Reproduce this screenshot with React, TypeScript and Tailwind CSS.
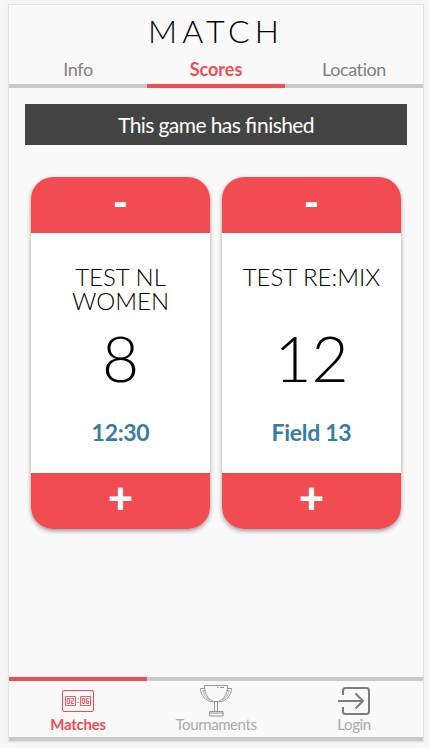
import React from "react";

function Tab({ label, active = false }: { label: string; active?: boolean }) {
  return (
    <button
      className={`flex h-[38px] flex-1 items-start justify-center border-b-4 pt-[7px] text-[18px] leading-[24px] ${
        active
          ? "border-[#f14c52] font-bold text-[#f14c52]"
          : "border-[#cdc9ca] tracking-[-0.4px] text-[#808080]"
      }`}
    >
      {label}
    </button>
  );
}

function Card({ team, score, detail }: { team: string; score: number; detail: string }) {
  return (
    <section className="flex h-[352px] w-[179px] flex-col overflow-hidden rounded-[22px] bg-white text-center shadow-[0_2px_4px_rgba(0,0,0,0.38)]">
      <button className="flex h-14 items-start justify-center bg-[#f14c52] text-[41px] leading-[50px] font-black text-white">
        -
      </button>
      <div className="flex h-[240px] flex-col items-center">
        <h2 className="mt-8 h-12 w-[150px] text-[24px] leading-[24px] font-light text-black">{team}</h2>
        <div className="mt-[13px] h-16 text-[64px] leading-[64px] font-light text-black">{score}</div>
        <div className="mt-[30px] text-[23px] leading-6 font-bold tracking-[-0.3px] text-[#377ba8]">{detail}</div>
      </div>
      <button className="flex h-14 items-start justify-center bg-[#f14c52] text-[44px] leading-[48px] font-black text-white">
        +
      </button>
    </section>
  );
}

function ScoreboardIcon() {
  return (
    <svg width="32" height="22" viewBox="0 0 32 22" fill="none" stroke="#f14c52">
      <rect x="0.5" y="0.5" width="31" height="21" rx="1.5" />
      <path strokeWidth="0.9" d="M3.500 6.500h10v9h-10zM18.500 6.500h10v9h-10z" />
      <path
        strokeWidth="0.9"
        d="M5.300 8.500h2.200v5H5.300zM9 8.500h2.600V11H9.400v2.500H12M20.300 8.500h2.200v5h-2.200zM27 8.500h-2.600v5h2.200V11h-2.200M15.200 9h1.600M15.200 12.500h1.600"
      />
    </svg>
  );
}

function TrophyIcon() {
  return (
    <svg width="34" height="33" viewBox="0 0 34 33" fill="none" stroke="#8b8b8b" strokeWidth="0.9">
      <path d="M5.500 3.500V1.500h23v2M18 3.500h1.500M21 3.500h4M5.500 3.500C6 11 10 17.500 17 17.500S28 11 28.500 3.500" />
      <path d="M5.500 4.500H1.500C1.500 11 6.500 17.500 14 18M28.500 4.500h4C32.500 11 27.500 17.500 20 18" />
      <path strokeWidth="0.7" d="M6 6.500H3.800C5 11.500 7.500 14.500 11 16M28 6.500h2.200C29 11.500 26.500 14.500 23 16" />
      <path d="M15.500 18v9M18.500 18v9M10.500 27.500h13.500v4.500H10.500zM10.500 29h13.500" />
    </svg>
  );
}

function LoginIcon() {
  return (
    <svg width="32" height="28" viewBox="0 0 32 28" fill="none" stroke="#7d7d7d" strokeWidth="2">
      <path d="M5 8V3.500Q5 1 7.500 1H28.500Q31 1 31 3.500v21Q31 27 28.500 27H7.500Q5 27 5 24.500V20M0 14h25M17.500 6.500l7.500 7.500L17.500 21.500" />
    </svg>
  );
}

export default function App() {
  return (
    <div className="h-[748px] w-[429px] overflow-hidden bg-[#f7f7f7] pt-1 pl-2 [font-family:Lato,sans-serif]">
      <main className="flex h-[738px] w-[416px] flex-col border border-[#e2e2e2] bg-[#f9f9f9] shadow-[0_0_10px_rgba(0,0,0,0.04)]">
        <h1 className="h-[45px] pt-[5px] text-center text-[32px] leading-[42px] font-light tracking-[5px] text-black">
          MATCH
        </h1>
        <nav className="flex">
          <Tab label="Info" />
          <Tab label="Scores" active />
          <Tab label="Location" />
        </nav>
        <div className="mx-4 mt-4 h-[41px] bg-[#444] text-center text-[21px] leading-[42px] tracking-[-0.58px] text-white">
          This game has <span className="tracking-normal">fi</span>nished
        </div>
        <div className="mx-[22px] mt-8 flex gap-3">
          <Card team="TEST NL WOMEN" score={8} detail="12:30" />
          <Card team="TEST RE:MIX" score={12} detail="Field 13" />
        </div>
        <nav className="mt-auto flex h-16 border-b-4 border-[#cdc9ca] text-[15px] leading-[18px]">
          <button className="flex flex-1 flex-col items-center border-t-4 border-[#f14c52] pt-[9px] font-bold tracking-[-0.25px] text-[#f14c52]">
            <ScoreboardIcon />
            <span className="mt-[3px]">Matches</span>
          </button>
          <button className="flex flex-1 flex-col items-center border-t-4 border-[#cdc9ca] pt-[3px] tracking-[-0.42px] text-[#aaa]">
            <TrophyIcon />
            <span className="-mt-[2px]">Tournaments</span>
          </button>
          <button className="flex flex-1 flex-col items-center border-t-4 border-[#cdc9ca] pt-[6px] tracking-[-0.42px] text-[#aaa]">
            <LoginIcon />
            <span>Login</span>
          </button>
        </nav>
      </main>
    </div>
  );
}
